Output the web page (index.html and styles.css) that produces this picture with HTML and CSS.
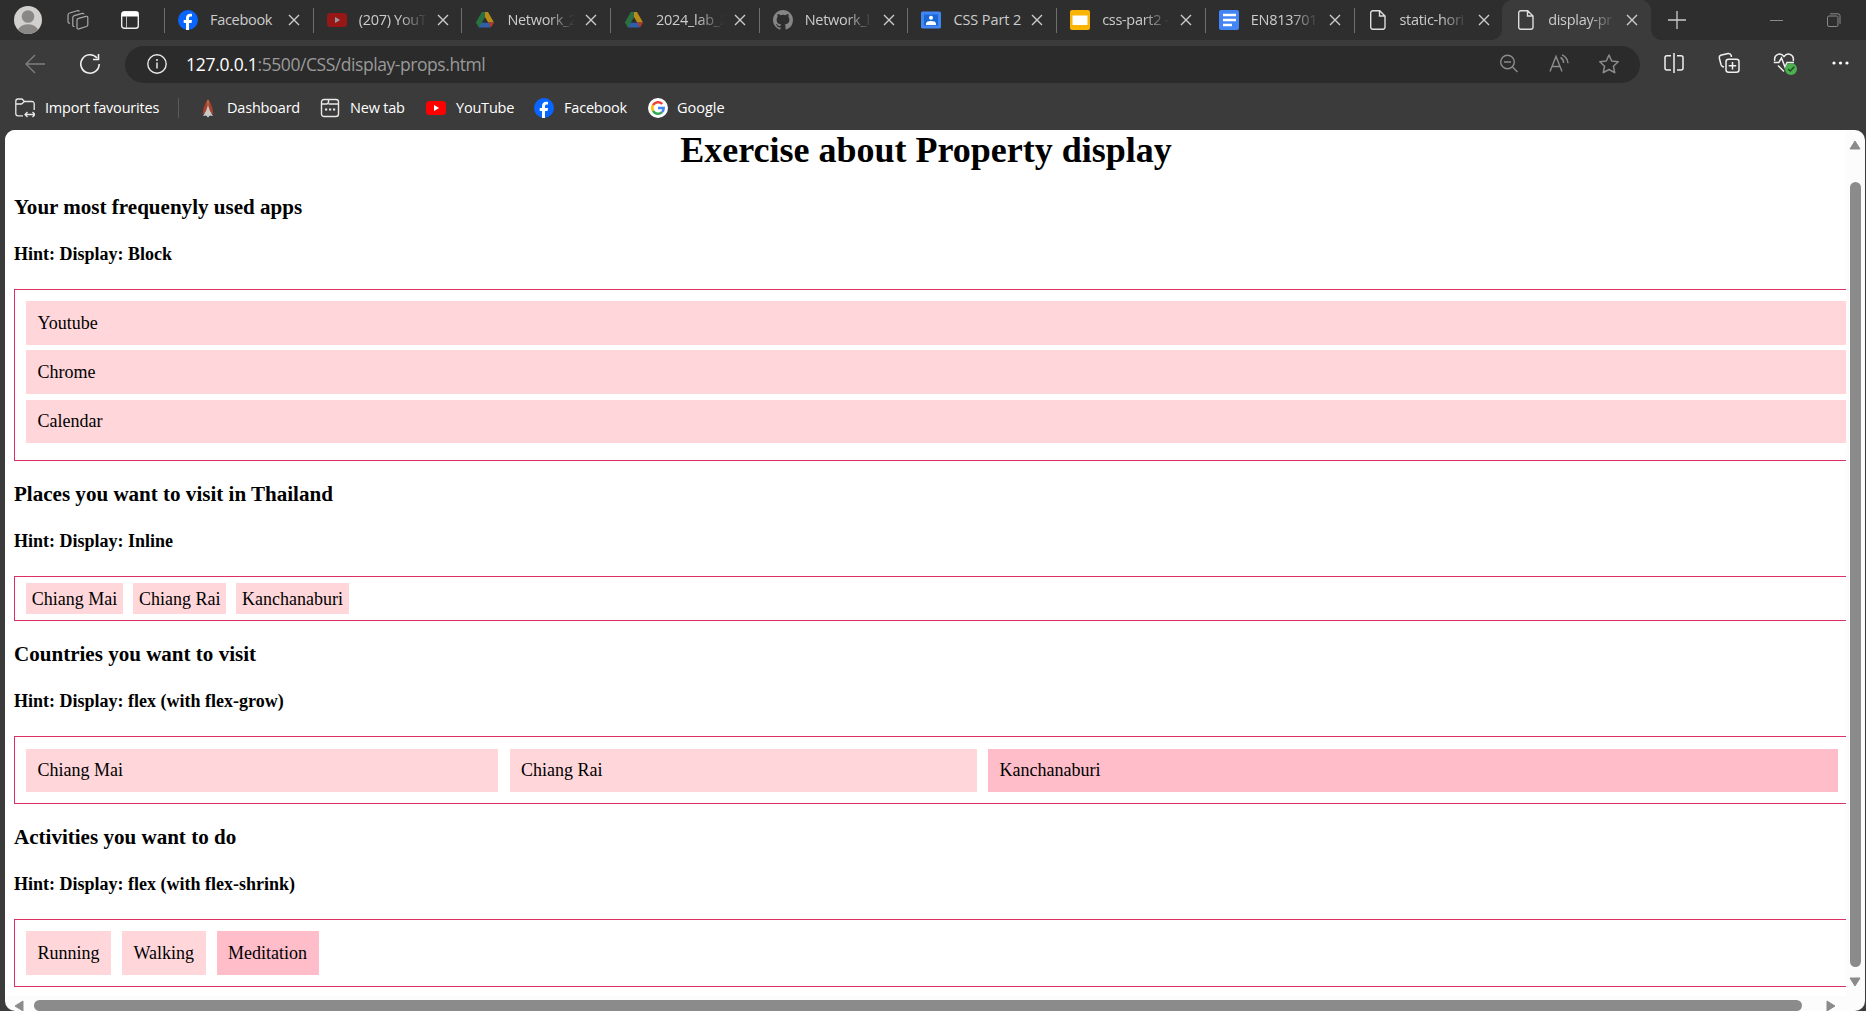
FILE: index.html
```html
<!DOCTYPE html>
<html lang="en">
<head>
<meta charset="utf-8">
<title>display-props.html</title>
<link rel="stylesheet" href="styles.css">
</head>
<body>
<svg class="defs" aria-hidden="true">
  <symbol id="close" viewBox="0 0 12 12"><path d="M1 1l10 10M11 1L1 11" fill="none" stroke="#ccc" stroke-width="1.4"/></symbol>
  <symbol id="facebook" viewBox="0 0 20 20"><circle cx="10" cy="10" r="10" fill="#0866ff"/><path d="M8 20v-7H5.700v-3H8V8.300C8 5.300 9.500 3.700 12.200 3.700c.8 0 1.400.1 1.800.2v2.700h-1.300c-1.300 0-1.700.6-1.700 1.700V10h3l-.5 3H11v7z" fill="#fff"/></symbol>
  <symbol id="youtube" viewBox="0 0 20 20"><rect y="3" width="20" height="14" rx="3.500" fill="#f00"/><path d="M8 7l5.200 3L8 13z" fill="#fff"/></symbol>
  <symbol id="drive" viewBox="0 0 20 20"><path d="M7 2h6l-3 5.500L4 17.500 1 12.500z" fill="#2a7040"/><path d="M7 2h6l6 10.500h-6z" fill="#b98c1a"/><path d="M4 12.500h12L15.500 17.500H4z" fill="#2f5fa8"/><path d="M13 12.500h6l-3 5z" fill="#b03a30"/><path d="M7 2h3v5.500L4 17.500 1 12.500z" fill="#2a7040"/><path d="M10 7.500l3 5H7z" fill="#2e2e2e"/></symbol>
  <symbol id="page" viewBox="0 0 20 20"><path d="M4.700.8h7L17 6v11a2 2 0 0 1-2 2.200H4.700a2 2 0 0 1-2-2.200V2.800a2 2 0 0 1 2-2zM11.500.8V6H17" fill="none" stroke="#ddd" stroke-width="1.400"/></symbol>
</svg>

<div class="browser">
  <div class="tabstrip">
    <div class="tabstrip-tools">
      <svg class="avatar" viewBox="0 0 28 28"><defs><clipPath id="face"><circle cx="14" cy="14" r="14"/></clipPath></defs><g clip-path="url(#face)"><path fill="#d2d0ce" d="M0 0h28v28H0z"/><circle cx="14" cy="10.500" r="6.300" fill="#8a8886"/><ellipse cx="14" cy="26" rx="10.500" ry="7.800" fill="#8a8886"/></g></svg>
      <svg class="workspaces" viewBox="0 0 22 22" fill="none" stroke="#a8a8a8" stroke-width="1.200" stroke-linejoin="round"><path d="M11.500 9.300l7.500-2q1.800-.4 1.800 1.400v7q0 1.400-1.400 1.800l-7.500 2.400q-1.900.5-1.900-1.400V11q0-1.400 1.500-1.700z"/><path d="M7.500 17.500q-1.700.2-1.700-1.500V8.500Q5.800 7 7.300 6.600l8-2.200q1.500-.3 1.700 1"/><path d="M3 14.300Q1 14.300 1 12.500V6Q1 4.400 2.600 4L10.300 1.700q1.500-.4 2 .8"/></svg>
      <svg class="vertical-tabs" viewBox="0 0 18 18"><rect x=".7" y=".7" width="16.600" height="16.600" rx="2.500" fill="none" stroke="#eee" stroke-width="1.400"/><path d="M1 1h16v4.500H1z" fill="#fff"/><path d="M5.500 5v12" stroke="#bbb"/></svg>
    </div>
    <div class="tab"><svg class="favicon"><use href="#facebook"/></svg><span class="tab-title tab-full">Facebook</span><svg class="close"><use href="#close"/></svg></div>
    <div class="tab"><svg class="favicon dim"><use href="#youtube"/></svg><span class="tab-title">(207) YouT</span><svg class="close"><use href="#close"/></svg></div>
    <div class="tab"><svg class="favicon"><use href="#drive"/></svg><span class="tab-title">Network_2</span><svg class="close"><use href="#close"/></svg></div>
    <div class="tab"><svg class="favicon"><use href="#drive"/></svg><span class="tab-title">2024_lab_2</span><svg class="close"><use href="#close"/></svg></div>
    <div class="tab"><svg class="favicon" viewBox="0 0 16 16"><path fill="#858585" d="M8 0C3.580 0 0 3.580 0 8c0 3.540 2.290 6.530 5.470 7.590.4.070.55-.17.55-.38 0-.19-.01-.82-.01-1.490-2.010.37-2.530-.49-2.690-.94-.09-.23-.48-.94-.82-1.130-.28-.15-.68-.52-.01-.53.63-.01 1.080.58 1.230.82.72 1.210 1.870.87 2.330.66.070-.52.280-.87.510-1.070-1.780-.2-3.640-.89-3.640-3.950 0-.87.310-1.590.82-2.150-.08-.2-.36-1.020.08-2.120 0 0 .67-.21 2.200.82a7.600 7.600 0 0 1 4 0c1.530-1.040 2.200-.82 2.200-.82.44 1.100.16 1.920.08 2.120.51.56.82 1.270.82 2.150 0 3.070-1.870 3.750-3.650 3.950.29.25.54.73.54 1.480 0 1.070-.01 1.930-.01 2.200 0 .21.150.46.550.38A8 8 0 0 0 16 8c0-4.420-3.580-8-8-8z"/></svg><span class="tab-title">Network_l</span><svg class="close"><use href="#close"/></svg></div>
    <div class="tab"><svg class="favicon" viewBox="0 0 20 20"><rect y="1.500" width="20" height="17" rx="1.500" fill="#4285f4"/><path d="M3 4.500h14v11H3z" fill="#1967d2"/><circle cx="10" cy="7.700" r="2" fill="#fff"/><path d="M5 15v-1.500c0-3.300 10-3.300 10 0V15z" fill="#fff"/></svg><span class="tab-title tab-full wide">CSS Part 2</span><svg class="close"><use href="#close"/></svg></div>
    <div class="tab"><svg class="favicon" viewBox="0 0 20 20"><rect width="20" height="20" rx="2" fill="#f9b406"/><path d="M2.500 5.500h15v9.500h-15z" fill="#fff"/></svg><span class="tab-title">css-part2 -</span><svg class="close"><use href="#close"/></svg></div>
    <div class="tab"><svg class="favicon" viewBox="0 0 20 20"><rect width="20" height="20" rx="2" fill="#4285f4"/><path d="M4 5h13M4 10h13M4 15h9" stroke="#fff" stroke-width="2.400"/></svg><span class="tab-title">EN813701</span><svg class="close"><use href="#close"/></svg></div>
    <div class="tab"><svg class="favicon"><use href="#page"/></svg><span class="tab-title">static-hori</span><svg class="close"><use href="#close"/></svg></div>
    <div class="tab active"><svg class="favicon"><use href="#page"/></svg><span class="tab-title">display-pr</span><svg class="close"><use href="#close"/></svg></div>
    <svg class="new-tab" viewBox="0 0 18 18"><path d="M9 0v18M0 9h18" stroke="#ccc" stroke-width="1.300"/></svg>
    <svg class="minimise" viewBox="0 0 13 13"><path d="M0 6.500h13" stroke="#8a8a8a"/></svg>
    <svg class="restore" viewBox="0 0 14 14" fill="none" stroke="#8a8a8a"><rect x=".5" y="3" width="10.500" height="10.500" rx="1.500"/><path d="M3 .8h8q2 0 2 2v8"/></svg>
  </div>

  <div class="toolbar">
    <svg class="back" viewBox="0 0 20 20"><path d="M20 10H1M10 1L1 10l9 9" fill="none" stroke="#808080" stroke-width="1.300"/></svg>
    <svg class="reload" viewBox="0 0 22 22"><path d="M20.200 11A9.200 9.200 0 1 1 18 5M19.500 1v5.500H14" fill="none" stroke="#f0f0f0" stroke-width="1.600"/></svg>
    <div class="address">
      <svg class="info" viewBox="0 0 20 20"><circle cx="10" cy="10" r="9.200" fill="none" stroke="#e8e8e8" stroke-width="1.400"/><path d="M10 8.500v6" stroke="#e8e8e8" stroke-width="1.500"/><circle cx="10" cy="6" r="1" fill="#e8e8e8"/></svg>
      <span class="url"><b>127.0.0.1</b>:5500/CSS/display-props.html</span>
      <div class="address-actions">
        <svg viewBox="0 0 20 20" fill="none" stroke="#8c8c8c" stroke-width="1.400"><circle cx="8.500" cy="8" r="6.800"/><path d="M13.500 13l5 5M5 8h7"/></svg>
        <svg viewBox="0 0 20 20" fill="none" stroke="#8c8c8c" stroke-width="1.400"><path d="M1 17.500L7 2.500l6 15M3.200 12.500h7.600M11.500 3.500q3 1.500 3.200 5.500M13 .8q5.500 2.500 6 8.500"/></svg>
        <svg viewBox="0 0 20 20" fill="none" stroke="#8c8c8c" stroke-width="1.500" stroke-linejoin="round"><path d="M10 1l2.700 6 6.500.8-4.800 4.400 1.300 6.500L10 15.500l-5.700 3.200 1.300-6.500L.8 7.800 7.300 7z"/></svg>
      </div>
    </div>
    <div class="toolbar-actions">
      <svg viewBox="0 0 22 22" fill="none" stroke="#f0f0f0" stroke-width="1.500"><path d="M8 3.700H4Q2 3.700 2 5.700V16q0 2 2 2h4M14 3.700h4q2 0 2 2V16q0 2-2 2h-4M11 1v20"/></svg>
      <svg viewBox="0 0 22 22" fill="none" stroke="#f0f0f0" stroke-width="1.500"><rect x="8" y="7.200" width="13" height="13" rx="2.500"/><path d="M14.500 10v7.500M10.700 13.700h7.500M6 15l-1.500-.5Q3.500 14 3 12.500L1.300 6Q1 4 2.700 3.300L10 1.500q2.300-.4 3.300 2V5"/></svg>
      <svg class="health" viewBox="0 0 24 24" fill="none" stroke="#f0f0f0" stroke-width="1.500"><path d="M1.800 9C.5 3 7-.5 11 4.500 15-.5 21.500 3 20.200 9M5 13.500l6 6M.8 10.500h5L8.500 6l3.500 9 2-4.500h7"/><circle cx="18" cy="17" r="6" fill="#4caf50" stroke="none"/><path d="M15 17l2.300 2 4-4.200" stroke="#234d27"/></svg>
      <svg viewBox="0 0 22 22" fill="#fff"><circle cx="4" cy="11" r="1.600"/><circle cx="10.500" cy="11" r="1.600"/><circle cx="17" cy="11" r="1.600"/></svg>
    </div>
  </div>

  <div class="favourites">
    <div class="favourite import"><svg viewBox="0 0 20 20" fill="none" stroke="#e8e8e8" stroke-width="1.300"><path d="M8 17.800H3a2.200 2.200 0 0 1-2.200-2.200V3.200Q.8 1 3 1h4l2.500 2.500H17a2.200 2.200 0 0 1 2.200 2.200V12M1 6h5.500l3-2.500M10 16.500h10M12.500 14L10 16.500l2.500 2.500M17.500 14l2.500 2.500-2.500 2.500"/></svg><span>Import favourites</span></div>
    <div class="favourite dashboard"><svg viewBox="0 0 20 20"><path d="M10 1C7 5 5 10 4.700 16l2.800-1L10 19l2.500-4 2.800 1C15 10 13 5 10 1z" fill="#a5432d"/><path d="M10 7l2 6 3 5-3-.5-2 2-2-2-3 .5 3-5z" fill="#c9c9c9"/><path d="M9.500 2h1v5h-1z" fill="#d2826e"/></svg><span>Dashboard</span></div>
    <div class="favourite newtab"><svg viewBox="0 0 20 20" fill="none" stroke="#e8e8e8" stroke-width="1.400"><rect x="1.500" y="1.500" width="17" height="17" rx="2.500"/><path d="M2 6h5l1.500-1.500V2M8.500 6H18"/><path d="M5 11.500h2.200M9 11.500h2.200M13 11.500h2.200" stroke-width="2"/></svg><span>New tab</span></div>
    <div class="favourite youtube"><svg><use href="#youtube"/></svg><span>YouTube</span></div>
    <div class="favourite facebook"><svg><use href="#facebook"/></svg><span>Facebook</span></div>
    <div class="favourite google"><svg viewBox="0 0 20 20" fill="none" stroke-width="2.500"><circle cx="10" cy="10" r="10" fill="#fff"/><path d="M5 7.200A5.700 5.700 0 0 1 14.200 6" stroke="#ea4335"/><path d="M5 12.800A5.800 5.800 0 0 1 5 7.200" stroke="#fbbc05"/><path d="M14 14.100A5.700 5.700 0 0 1 5 12.800" stroke="#34a853"/><path d="M10 10h5.700Q15.700 12.600 14 14.100" stroke="#4285f4"/></svg><span>Google</span></div>
  </div>

  <div class="viewport">
    <main class="document">
      <h1>Exercise about Property display</h1>
      <h3>Your most frequenyly used apps</h3>
      <h4>Hint: Display: Block</h4>
      <div class="box block-box">
        <div class="item">Youtube</div>
        <div class="item">Chrome</div>
        <div class="item">Calendar</div>
      </div>
      <h3>Places you want to visit in Thailand</h3>
      <h4>Hint: Display: Inline</h4>
      <div class="box inline-box">
        <span>Chiang Mai</span>
        <span>Chiang Rai</span>
        <span>Kanchanaburi</span>
      </div>
      <h3>Countries you want to visit</h3>
      <h4>Hint: Display: flex (with flex-grow)</h4>
      <div class="box grow-box">
        <div class="item">Chiang Mai</div>
        <div class="item">Chiang Rai</div>
        <div class="item strong">Kanchanaburi</div>
      </div>
      <h3>Activities you want to do</h3>
      <h4>Hint: Display: flex (with flex-shrink)</h4>
      <div class="box shrink-box">
        <div class="item">Running</div>
        <div class="item">Walking</div>
        <div class="item strong">Meditation</div>
      </div>
    </main>
    <div class="scroll-y">
      <svg viewBox="0 0 12 10"><path d="M6 1l5 8H1z"/></svg>
      <div class="thumb"></div>
      <svg viewBox="0 0 12 10"><path d="M6 9l5-8H1z"/></svg>
    </div>
    <div class="scroll-x">
      <svg viewBox="0 0 10 12"><path d="M1 6l8-5v10z"/></svg>
      <div class="thumb"></div>
      <svg viewBox="0 0 10 12"><path d="M9 6L1 1v10z"/></svg>
    </div>
  </div>
</div>
</body>
</html>
```
FILE: styles.css
```css
* { box-sizing: border-box; }
body { margin: 0; background: #3b3b3b; overflow: hidden; }
svg { display: block; flex: none; }
.defs { display: none; }

.browser {
  display: grid;
  grid-template-rows: 40px 47px 43px 881px;
  width: 1866px;
  height: 1011px;
  font-family: "Open Sans", "Noto Sans", sans-serif;
}

/* Tab strip */
.tabstrip { display: flex; align-items: center; background: #2e2e2e; }
.tabstrip-tools { display: flex; align-items: center; width: 164px; padding-left: 14px; }
.avatar { width: 28px; height: 28px; }
.workspaces { width: 22px; height: 22px; margin-left: 25px; }
.vertical-tabs { width: 18px; height: 18px; margin-left: 32px; }
.tab {
  display: flex;
  align-items: center;
  flex: none;
  width: 148.700px;
  height: 40px;
  padding-left: 14px;
  background: linear-gradient(#6e6e6e, #6e6e6e) 0 8px / 1px 25px no-repeat;
}
.tab.active {
  position: relative;
  background: #3b3b3b;
  border-radius: 10px 10px 0 0;
}
.tab.active::before, .tab.active::after {
  content: "";
  position: absolute;
  bottom: 0;
  width: 10px;
  height: 10px;
}
.tab.active::before { left: -10px; background: radial-gradient(circle at 0 0, #2e2e2e 9.500px, #3b3b3b 10px); }
.tab.active::after { right: -10px; background: radial-gradient(circle at 100% 0, #2e2e2e 9.500px, #3b3b3b 10px); }
.favicon { width: 20px; height: 20px; }
.favicon.dim { opacity: .5; }
.tab-title {
  width: 68px;
  margin-left: 12px;
  white-space: nowrap;
  color: #ccc;
  font-size: 14.500px;
  line-height: 22px;
  letter-spacing: -.3px;
  -webkit-mask-image: linear-gradient(90deg, #000 60%, transparent);
  mask-image: linear-gradient(90deg, #000 60%, transparent);
}
.tab-title.tab-full { -webkit-mask-image: none; mask-image: none; }
.tab-title.wide { letter-spacing: -.1px; }
.close { width: 12px; height: 12px; margin-left: 10px; }
.new-tab { width: 18px; height: 18px; margin-left: 17px; }
.minimise { width: 13px; height: 13px; margin-left: 84px; }
.restore { width: 14px; height: 14px; margin-left: 44px; }

/* Toolbar */
.toolbar { display: flex; align-items: center; }
.back { width: 20px; height: 20px; margin-left: 25px; }
.reload { width: 22px; height: 22px; margin-left: 34px; }
.address {
  display: flex;
  align-items: center;
  width: 1515px;
  height: 37px;
  margin: 1px 0 0 24px;
  padding-left: 22px;
  border-radius: 19px;
  background: #2b2b2b;
}
.info { width: 20px; height: 20px; }
.url { margin: -1px 0 0 19px; color: #9a9a9a; font-size: 17.500px; line-height: 24px; letter-spacing: -.44px; white-space: nowrap; }
.url b { color: #fff; font-weight: 400; letter-spacing: -.25px; }
.address-actions { display: flex; gap: 30px; margin-left: auto; padding-right: 21px; }
.address-actions svg { width: 20px; height: 20px; }
.toolbar-actions { display: flex; gap: 33px; margin-left: 23px; }
.toolbar-actions svg { width: 22px; height: 22px; }
.toolbar-actions .health { width: 24px; height: 24px; }

/* Favourites bar */
.favourites { display: flex; align-items: center; padding: 0 0 1px 15px; }
.favourite { display: flex; align-items: center; gap: 10px; height: 20px; color: #fff; font-size: 14.500px; line-height: 20px; letter-spacing: -.2px; white-space: nowrap; }
.favourite svg { width: 20px; height: 20px; }
.favourite span { margin-top: -1px; }
.import { width: 164px; border-right: 1px solid #5a5a5a; }
.dashboard { gap: 9px; width: 122px; margin-left: 19px; }
.newtab { width: 106px; }
.youtube { width: 108px; }
.facebook { width: 114px; }
.google { gap: 9px; letter-spacing: 0; }

/* Page area with its scrollbars */
.viewport {
  display: grid;
  grid-template: 866px 15px / 1841px 19px;
  width: 1860px;
  margin-left: 5px;
  border-radius: 10px;
  background: #fcfcfc;
  overflow: hidden;
}
.document { padding-left: 9px; background: #fff; color: #000; font: 18px/20px "Liberation Serif", "Times New Roman", serif; overflow: hidden; }
h1 { width: 1824px; margin: 0; font-size: 36px; line-height: 40px; height: 44px; text-align: center; }
h3 { margin: 0; padding-top: 21px; font-size: 21.060px; line-height: 24px; }
h4 { margin: 25px 0; font-size: 18px; line-height: 20px; }
.box { width: 1850px; border: 1px solid #dc2f64; }
.item { padding: 12px 11.500px; background: #ffd7db; }
.strong { background: #ffbdca; }
.block-box { display: grid; grid-template-rows: 44px 44px 43px; row-gap: 5px; height: 172px; padding: 11px 0 0 11px; }
.block-box .item:last-child { margin-top: 1px; margin-bottom: -1px; padding-top: 11px; }
.inline-box { display: flex; gap: 10px; height: 45px; padding: 6px 11px; }
.inline-box span { height: 31px; padding: 6px 5.800px; background: #ffd7db; }
.grow-box { display: grid; grid-template-columns: 472px 467px 850px; column-gap: 11.500px; height: 68px; padding: 12px 0 11px 11px; }
.grow-box .item { height: 43px; padding-top: 11px; }
.shrink-box { display: flex; gap: 11px; height: 68px; padding: 11px; }

.scroll-y { display: flex; flex-direction: column; align-items: center; padding: 10px 1px 0 0; }
.scroll-y svg { width: 12px; height: 10px; }
.scroll-y .thumb { width: 11px; height: 785px; margin: 32px 0 10px; border-radius: 6px; background: #8b8b8b; flex: none; }
.scroll-x { display: flex; align-items: center; padding: 4px 0 0 9px; height: 15px; }
.scroll-x svg { width: 10px; height: 12px; }
.scroll-x .thumb { width: 1768px; height: 11px; margin: 0 24px 0 10px; border-radius: 6px; background: #8b8b8b; }
.scroll-x path, .scroll-y path { fill: #8b8b8b; stroke: #8b8b8b; stroke-linejoin: round; }
```
